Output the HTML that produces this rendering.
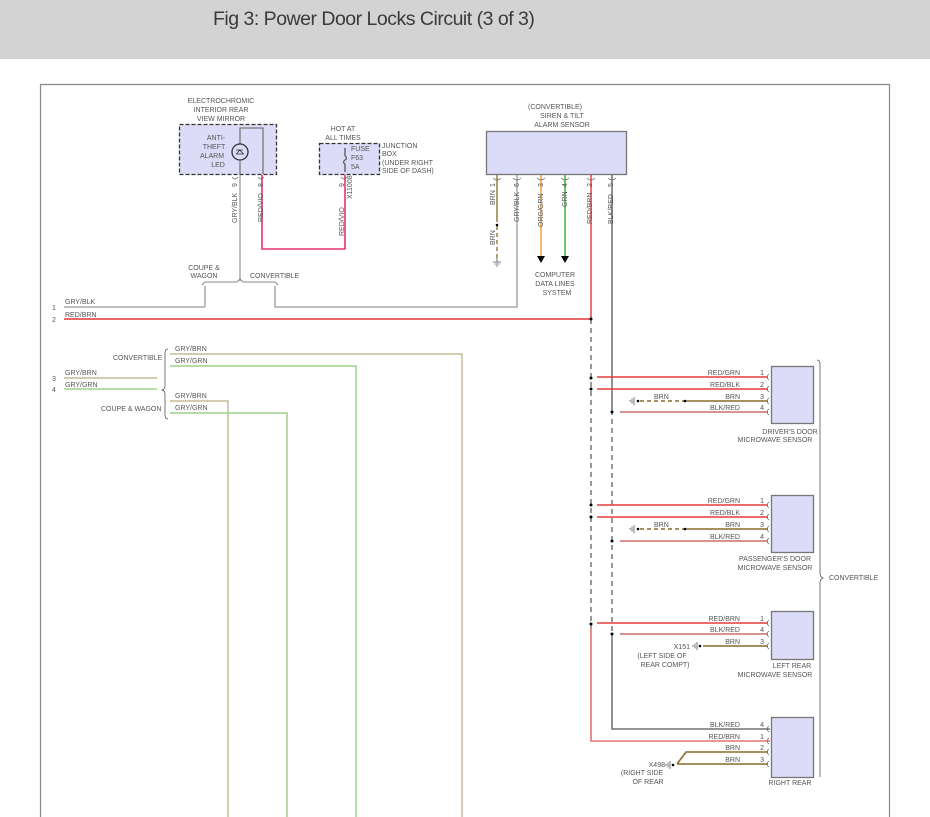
<!DOCTYPE html>
<html><head><meta charset="utf-8"><style>
html,body{margin:0;padding:0;background:#fff;width:930px;height:817px;overflow:hidden}
.hdr{position:absolute;left:0;top:0;width:930px;height:59px;background:#d3d3d3}
.hdr span{position:absolute;left:213px;top:8px;font:19.5px "Liberation Sans",sans-serif;color:#3a3a3a;letter-spacing:-0.5px}
svg{position:absolute;left:0;top:0}
text{font-family:"Liberation Sans",sans-serif;font-size:7px;fill:#555}
</style></head><body>
<div class="hdr"><span>Fig 3: Power Door Locks Circuit (3 of 3)</span></div>
<svg width="930" height="817" viewBox="0 0 930 817">
<g fill="none" stroke-width="1.3">
<path d="M40.5 817V84.5H889.5V817" stroke="#888" stroke-width="1.2"/>
<rect x="179.5" y="124.5" width="97" height="50" fill="#dcdcf8" stroke="#333" stroke-dasharray="4,2"/>
<path d="M240 144V128H263V174" stroke="#777"/>
<circle cx="240" cy="152" r="8" stroke="#333" fill="#dcdcf8"/>
<path d="M236 150h7M239.5 150l-3 4h7zM236 154h7" stroke="#333" stroke-width="0.8"/>
<rect x="319.5" y="143.5" width="60" height="31" fill="#dcdcf8" stroke="#333" stroke-dasharray="4,2"/>
<path d="M345 148V156M345 164V172" stroke="#555"/>
<path d="M345 156q3 2 0 4q-3 2 0 4" stroke="#555"/>
<path d="M240 160V174" stroke="#777"/>
<path d="M240 175V281" stroke="#aaa" stroke-width="1.5"/>
<path d="M205 286V307M275 286V307H517V175" stroke="#aaa" stroke-width="1.5"/>
<path d="M202 285l3-3H237l3-3 3 3H275l3 3" stroke="#888" stroke-width="1"/>
<path d="M64 307H205" stroke="#aaa" stroke-width="1.5"/>
<path d="M262 175V249H345V175" stroke="#e8336a" stroke-width="1.6"/>
<path d="M64 319H591" stroke="#e85050" stroke-width="1.8"/>
<rect x="486.5" y="131.5" width="140" height="43" fill="#dcdcf8" stroke="#777"/>
<path d="M497 175V222" stroke="#8a6a2a"/>
<path d="M497 226V258" stroke="#8a6a2a" stroke-dasharray="4,3"/>
<path d="M541 175V256" stroke="#f0a040" stroke-width="1.5"/>
<path d="M565 175V256" stroke="#3cb43c" stroke-width="1.5"/>
<path d="M591 175V319" stroke="#e85050" stroke-width="1.6"/>
<path d="M591 319V628" stroke="#333" stroke-dasharray="5,4" stroke-width="1"/>
<path d="M591 628V741H770" stroke="#e87070" stroke-width="1.6"/>
<path d="M612 175V410" stroke="#555"/>
<path d="M612 410V640" stroke="#333" stroke-dasharray="5,4" stroke-width="1"/>
<path d="M612 640V729H770" stroke="#555"/>
<path d="M64 378H157M170 354H462V817M170 401H228V817" stroke="#c8b89a" stroke-width="1.5"/>
<path d="M64 389H157M170 366H356V817M170 413H287V817" stroke="#9ed08a" stroke-width="1.5"/>
<path d="M168 349q-3 0-3 4V386q0 3-3 4q3 1 3 4V415q0 4 3 4" stroke="#555" stroke-width="0.8"/>
<path d="M817 360q3 0 3 4V573q0 4 3 5q-3 1-3 5V777" stroke="#555" stroke-width="0.8"/>
<g fill="#dcdcf8" stroke="#777">
<rect x="771.5" y="366.5" width="42" height="57"/>
<rect x="771.5" y="495.5" width="42" height="57"/>
<rect x="771.5" y="611.5" width="42" height="48"/>
<rect x="771.5" y="717.5" width="42" height="60"/>
</g>
<g stroke="#e83a3a" stroke-width="1.5">
<path d="M597 377H768M597 389H768"/>
<path d="M597 505H768M597 517H768"/>
<path d="M597 623H768"/>
</g>
<path d="M620 412H768M620 541H768M620 634H768" stroke="#c05050" stroke-width="1.3"/>
<path d="M684 401H768M684 529H768M703 646H768M677 764H768M677 764L686 752H768" stroke="#8a6a2a" stroke-width="1.6"/>
<path d="M640 401H684M640 529H684" stroke="#8a6a2a" stroke-dasharray="4,3" stroke-width="1.4"/>
</g>
<g fill="#000">
<path d="M537 256h8l-4 7zM561 256h8l-4 7z"/>
<circle cx="591" cy="319" r="1.5"/><circle cx="591" cy="378" r="1.5"/><circle cx="591" cy="389" r="1.5"/>
<circle cx="591" cy="505" r="1.5"/><circle cx="591" cy="517" r="1.5"/><circle cx="591" cy="624" r="1.5"/>
<circle cx="612" cy="412" r="1.5"/><circle cx="612" cy="541" r="1.5"/><circle cx="612" cy="634" r="1.5"/>
<circle cx="497" cy="225" r="1.3"/><circle cx="685" cy="401" r="1.3"/><circle cx="685" cy="529" r="1.3"/>
<circle cx="638" cy="401" r="1.3"/><circle cx="638" cy="529" r="1.3"/><circle cx="700" cy="646" r="1.3"/><circle cx="673" cy="765" r="1.3"/>
</g>
<g stroke="#555" stroke-width="0.8" fill="none">
<path d="M493 262h8M494.5 264h5M496 266h2M497 258v4"/>
<path d="M634 397v8M632 398.5v5M630 400v2"/>
<path d="M634 525v8M632 526.5v5M630 528v2"/>
<path d="M697 642v8M695 643.5v5M693 645v2"/>
<path d="M670 761v8M668 762.5v5M666 764v2"/>
</g>
<g stroke="#666" stroke-width="0.7" fill="none">
<path d="M232 177q3 4 6 0M258 177q3 4 6 0M341 177q3 4 6 0"/>
<path d="M493 178q4 4 8 0M513 178q4 4 8 0M537 178q4 4 8 0M561 178q4 4 8 0M587 178q4 4 8 0M608 178q4 4 8 0"/>
<path d="M769 374q-4 3 0 6M769 386q-4 3 0 6M769 398q-4 3 0 6M769 409q-4 3 0 6"/>
<path d="M769 502q-4 3 0 6M769 514q-4 3 0 6M769 526q-4 3 0 6M769 538q-4 3 0 6"/>
<path d="M769 620q-4 3 0 6M769 631q-4 3 0 6M769 643q-4 3 0 6"/>
<path d="M769 726q-4 3 0 6M769 738q-4 3 0 6M769 749q-4 3 0 6M769 761q-4 3 0 6"/>
</g>
<g text-anchor="middle">
<text x="221" y="103">ELECTROCHROMIC</text><text x="221" y="112">INTERIOR REAR</text><text x="221" y="121">VIEW MIRROR</text>
<text x="216" y="140">ANTI-</text><text x="214" y="149">THEFT</text><text x="212" y="158">ALARM</text><text x="218" y="167">LED</text>
<text x="343" y="131">HOT AT</text><text x="343" y="140">ALL TIMES</text>
<text x="555" y="109">(CONVERTIBLE)</text><text x="562" y="118">SIREN &amp; TILT</text><text x="562" y="127">ALARM SENSOR</text>
<text x="555" y="277">COMPUTER</text><text x="555" y="286">DATA LINES</text><text x="557" y="295">SYSTEM</text>
<text x="204" y="270">COUPE &amp;</text><text x="204" y="278">WAGON</text>
<text x="790" y="434">DRIVER'S DOOR</text><text x="775" y="442">MICROWAVE SENSOR</text>
<text x="775" y="561">PASSENGER'S DOOR</text><text x="775" y="570">MICROWAVE SENSOR</text>
<text x="792" y="668">LEFT REAR</text><text x="775" y="677">MICROWAVE SENSOR</text>
<text x="790" y="785">RIGHT REAR</text>
<text x="662" y="658">(LEFT SIDE OF</text><text x="665" y="667">REAR COMPT)</text>
<text x="642" y="775">(RIGHT SIDE</text><text x="648" y="784">OF REAR</text>
</g>
<text x="351" y="151">FUSE</text><text x="351" y="160">F63</text><text x="351" y="169">5A</text>
<text x="382" y="148">JUNCTION</text><text x="382" y="156">BOX</text><text x="382" y="165">(UNDER RIGHT</text><text x="382" y="173">SIDE OF DASH)</text>
<text x="250" y="278">CONVERTIBLE</text>
<text x="829" y="580">CONVERTIBLE</text>
<text x="113" y="360">CONVERTIBLE</text><text x="101" y="411">COUPE &amp; WAGON</text>
<text x="65" y="304">GRY/BLK</text><text x="65" y="317">RED/BRN</text>
<text x="65" y="375">GRY/BRN</text><text x="65" y="387">GRY/GRN</text>
<text x="175" y="351">GRY/BRN</text><text x="175" y="363">GRY/GRN</text>
<text x="175" y="398">GRY/BRN</text><text x="175" y="410">GRY/GRN</text>
<text x="52" y="310">1</text><text x="52" y="322">2</text><text x="52" y="381">3</text><text x="52" y="392">4</text>
<g text-anchor="end">
<text x="740" y="375">RED/GRN</text><text x="740" y="387">RED/BLK</text><text x="740" y="399">BRN</text><text x="740" y="410">BLK/RED</text>
<text x="740" y="503">RED/GRN</text><text x="740" y="515">RED/BLK</text><text x="740" y="527">BRN</text><text x="740" y="539">BLK/RED</text>
<text x="740" y="621">RED/BRN</text><text x="740" y="632">BLK/RED</text><text x="740" y="644">BRN</text>
<text x="740" y="727">BLK/RED</text><text x="740" y="739">RED/BRN</text><text x="740" y="750">BRN</text><text x="740" y="762">BRN</text>
<text x="764" y="375">1</text><text x="764" y="387">2</text><text x="764" y="399">3</text><text x="764" y="410">4</text>
<text x="764" y="503">1</text><text x="764" y="515">2</text><text x="764" y="527">3</text><text x="764" y="539">4</text>
<text x="764" y="621">1</text><text x="764" y="632">4</text><text x="764" y="644">3</text>
<text x="764" y="727">4</text><text x="764" y="739">1</text><text x="764" y="750">2</text><text x="764" y="762">3</text>
<text x="690" y="649">X151</text><text x="665" y="767">X498</text>
</g>
<text x="654" y="399">BRN</text><text x="654" y="527">BRN</text>
<g>
<text transform="translate(237,223) rotate(-90)">GRY/BLK</text>
<text transform="translate(263,222) rotate(-90)">RED/VIO</text>
<text transform="translate(344,236) rotate(-90)">RED/VIO</text>
<text transform="translate(352,199) rotate(-90)">X11008</text>
<text transform="translate(237,187) rotate(-90)">9</text><text transform="translate(263,187) rotate(-90)">8</text><text transform="translate(344,187) rotate(-90)">9</text>
<text transform="translate(495,205) rotate(-90)">BRN</text>
<text transform="translate(495,245) rotate(-90)">BRN</text>
<text transform="translate(519,222) rotate(-90)">GRY/BLK</text>
<text transform="translate(543,227) rotate(-90)">ORG/GRN</text>
<text transform="translate(567,207) rotate(-90)">GRN</text>
<text transform="translate(592,224) rotate(-90)">RED/BRN</text>
<text transform="translate(613,224) rotate(-90)">BLK/RED</text>
<text transform="translate(495,187) rotate(-90)">1</text><text transform="translate(519,187) rotate(-90)">6</text><text transform="translate(543,187) rotate(-90)">3</text><text transform="translate(567,187) rotate(-90)">4</text><text transform="translate(592,187) rotate(-90)">2</text><text transform="translate(613,187) rotate(-90)">5</text>
</g>
</svg>
</body></html>
